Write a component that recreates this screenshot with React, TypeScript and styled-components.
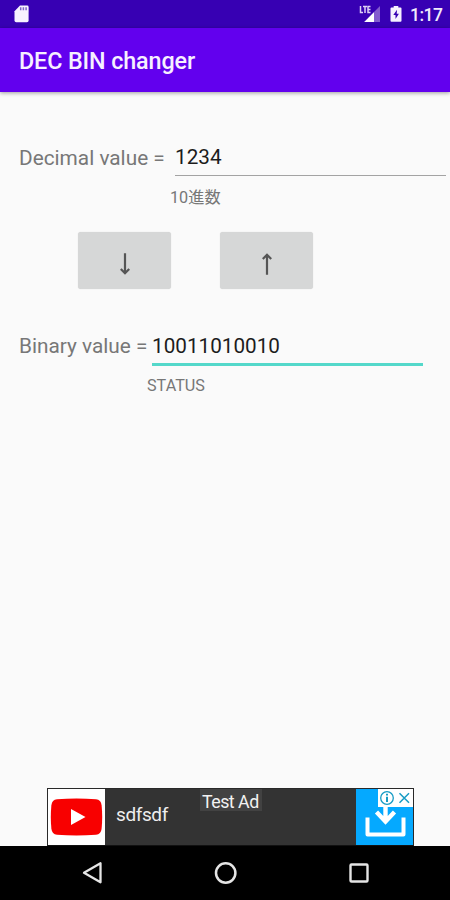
import React from "react";
import styled, { createGlobalStyle } from "styled-components";

const GlobalStyle = createGlobalStyle`
  *, *::before, *::after { box-sizing: border-box; }
  html, body { margin: 0; padding: 0; background: #fafafa; }
  body { font-family: Roboto, "Noto Sans CJK JP", sans-serif; overflow: hidden; }
`;

const Screen = styled.div`
  width: 450px;
  height: 900px;
  display: flex;
  flex-direction: column;
  background: #fafafa;
`;

const StatusBar = styled.header`
  height: 28px;
  display: flex;
  align-items: center;
  padding: 0 9px 0 14px;
  background: #3700b3;
  color: #f1ebfb;
`;

const StatusIcons = styled.div`
  margin-left: auto;
  display: flex;
  align-items: center;
`;

const BatteryGap = styled.span`
  display: flex;
  margin-left: 9px;
`;

const Clock = styled.span`
  margin: 2px 0 0 8px;
  width: 31px;
  font-size: 17.5px;
  line-height: 20px;
  font-weight: 500;
  white-space: nowrap;
  letter-spacing: -0.5px;
`;

const AppBar = styled.div`
  height: 64px;
  flex-shrink: 0;
  display: flex;
  align-items: center;
  padding: 2px 19px 0;
  background: #6200ee;
  box-shadow: 0 1px 4px rgba(0, 0, 0, 0.38);
  z-index: 1;
`;

const Title = styled.h1`
  margin: 0;
  color: #f7f0ff;
  font-size: 23.3px;
  line-height: 28px;
  font-weight: 500;
  letter-spacing: -0.1px;
  white-space: nowrap;
`;

const Content = styled.main`
  flex: 1;
  min-height: 0;
  display: flex;
  flex-direction: column;
  padding-top: 49px;
`;

const FieldRow = styled.div`
  display: flex;
  height: 36px;
  padding-left: 19px;
`;

const Label = styled.label<{ $width: number }>`
  width: ${(p) => p.$width}px;
  flex-shrink: 0;
  color: #777;
  font-size: 20.8px;
  line-height: 34px;
  white-space: pre;
`;

const ValueInput = styled.input<{ $active?: boolean }>`
  width: 271px;
  height: ${(p) => (p.$active ? 37 : 35)}px;
  flex-shrink: 0;
  padding: 0 0 ${(p) => (p.$active ? 1 : 2)}px;
  border: 0;
  border-bottom: ${(p) => (p.$active ? "3px solid #54d8ca" : "1px solid #a3a3a3")};
  border-radius: 0;
  outline: 0;
  background: transparent;
  color: #1c1c1c;
  font-family: Roboto, sans-serif;
  font-size: 20.7px;
`;

const Hint = styled.p<{ $indent: number }>`
  margin: 10px 0 0 ${(p) => p.$indent}px;
  height: 22px;
  color: #777;
  font-size: 16.2px;
  line-height: 22px;
  white-space: nowrap;
`;

const ButtonRow = styled.div`
  display: flex;
  gap: 49px;
  margin: 23px 0 40px 78px;
`;

const ArrowButton = styled.button`
  width: 93px;
  height: 57px;
  display: flex;
  align-items: center;
  justify-content: center;
  padding: 6px 0 0;
  border: 0;
  border-radius: 3px;
  background: #d6d7d7;
  box-shadow: 0 0 1px rgba(0, 0, 0, 0.18);
  color: #555;
`;

const AdBanner = styled.aside`
  position: relative;
  width: 367px;
  height: 58px;
  margin: auto 0 0 47px;
  display: flex;
  background: #333;
  border: 1px solid #292929;
  border-bottom-color: #111;
`;

const AdLogo = styled.div`
  width: 57px;
  display: flex;
  align-items: center;
  justify-content: center;
  background: #fff;
`;

const AdHeadline = styled.span`
  margin: 14px 0 0 11px;
  color: #eee;
  font-size: 19px;
  line-height: 24px;
  letter-spacing: -0.4px;
`;

const TestTag = styled.span`
  position: absolute;
  top: 0;
  left: 152px;
  width: 62px;
  height: 22px;
  padding-left: 2px;
  background: #424242;
  color: #f2f2f2;
  font-size: 17.8px;
  line-height: 25px;
  letter-spacing: -0.5px;
  white-space: nowrap;
`;

const AdAction = styled.div`
  width: 57px;
  margin-left: auto;
  background: #05a9ff;
`;

const AdChoices = styled.div`
  position: absolute;
  top: 0;
  right: 0;
  width: 35px;
  height: 18px;
  background: #fff;
`;

const NavBar = styled.nav`
  height: 54px;
  flex-shrink: 0;
  display: flex;
  align-items: center;
  justify-content: space-between;
  padding: 0 78px 0 80px;
  background: #000;
`;

const SdCardIcon = () => (
  <svg width="16" height="18" viewBox="0 0 16 18">
    <path d="M6 .5h7.200q1.400 0 1.400 1.400v13.700q0 1.700-1.700 1.700H2.200Q.5 17.300.5 15.600V6.200Z" fill="#f7f2ff" />
    <path d="M6.700 2.300v3M9.400 2.300v3M12.100 2.300v3" stroke="#8062c8" strokeWidth="1.500" />
  </svg>
);

const SignalIcon = () => (
  <svg width="22" height="18" viewBox="0 0 22 18">
    <path d="M21 1v16H5Z" fill="#835bce" />
    <path d="M15 7.300V17H5.300Z" fill="#fff" />
    <path d="M1.500 1v6.500H4M4 1.500h4M6 1.500v6.500M11.500 1.500H9v6h2.500M9 4.500h2.500" fill="none" stroke="#ded0f5" strokeWidth="1.500" />
  </svg>
);

const BatteryIcon = () => (
  <svg width="12" height="18" viewBox="0 0 12 18">
    <path d="M3.700 1h4.600v1.500h2.200q1 0 1 1v12.300q0 1-1 1h-9q-1 0-1-1V3.500q0-1 1-1h2.200Z" fill="#f6f0ff" />
    <path d="M7 4.800 3.300 10h2.200v4L8.900 8.800H6.700Z" fill="#3700b3" />
  </svg>
);

const DownArrow = () => (
  <svg width="12" height="24" viewBox="0 0 12 24">
    <path d="M6 1.300v20M1.800 17 6 21.200 10.200 17" fill="none" stroke="currentColor" strokeWidth="2.200" />
  </svg>
);

const UpArrow = () => (
  <svg width="12" height="24" viewBox="0 0 12 24">
    <path d="M6 22.700v-20M1.800 7 6 2.800 10.200 7" fill="none" stroke="currentColor" strokeWidth="2.200" />
  </svg>
);

const PlayLogo = () => (
  <svg width="53" height="38" viewBox="0 0 53 38">
    <path d="M7 1.200Q26.500-.2 46 1.200q5 .4 5.600 6 1.200 11.800 0 23.600-.6 5.600-5.600 6-19.500 1.400-39 0-5-.4-5.600-6-1.200-11.800 0-23.600Q2 1.600 7 1.200Z" fill="#f80000" />
    <path d="M21 11v16l14.500-8Z" fill="#fff" />
  </svg>
);

const DownloadIcon = () => (
  <svg width="57" height="56" viewBox="0 0 57 56">
    <path d="M11.500 28.500v17h36v-17" fill="none" stroke="#fff" strokeWidth="4" strokeLinejoin="round" />
    <path d="M29.500 16v17M20.500 23l9 9.500 9-9.500" fill="none" stroke="#fff" strokeWidth="4.400" />
  </svg>
);

const AdChoicesIcon = () => (
  <svg width="35" height="18" viewBox="0 0 35 18" fill="none" stroke="#169bc4">
    <circle cx="9" cy="9" r="6.300" strokeWidth="1.300" />
    <path d="M9 7.700v5.300M9 4.700v1.700" strokeWidth="2" />
    <path d="m21.500 4.200 9.500 9.500M31 4.200l-9.500 9.500" strokeWidth="1.500" />
  </svg>
);

const BackIcon = () => (
  <svg width="26" height="26" viewBox="0 0 26 26">
    <path d="M20.500 3.300v19L4 12.800Z" fill="none" stroke="#e5e5e5" strokeWidth="2.300" strokeLinejoin="round" />
  </svg>
);

const HomeIcon = () => (
  <svg width="26" height="26" viewBox="0 0 26 26">
    <circle cx="12.700" cy="13" r="9.700" fill="none" stroke="#e5e5e5" strokeWidth="2.500" />
  </svg>
);

const RecentsIcon = () => (
  <svg width="26" height="26" viewBox="0 0 26 26">
    <rect x="4.500" y="4.500" width="17" height="17" rx="1" fill="none" stroke="#e5e5e5" strokeWidth="2.400" />
  </svg>
);

export default function App() {
  return (
    <>
      <GlobalStyle />
      <Screen>
        <StatusBar>
          <SdCardIcon />
          <StatusIcons>
            <SignalIcon />
            <BatteryGap>
              <BatteryIcon />
            </BatteryGap>
            <Clock>1:17</Clock>
          </StatusIcons>
        </StatusBar>
        <AppBar>
          <Title>DEC BIN changer</Title>
        </AppBar>
        <Content>
          <FieldRow>
            <Label htmlFor="decimal" $width={156}>Decimal value =</Label>
            <ValueInput id="decimal" defaultValue="1234" />
          </FieldRow>
          <Hint $indent={170}>10進数</Hint>
          <ButtonRow>
            <ArrowButton aria-label="To binary"><DownArrow /></ArrowButton>
            <ArrowButton aria-label="To decimal"><UpArrow /></ArrowButton>
          </ButtonRow>
          <FieldRow>
            <Label htmlFor="binary" $width={133}>Binary value =</Label>
            <ValueInput id="binary" $active defaultValue="10011010010" />
          </FieldRow>
          <Hint $indent={147}>STATUS</Hint>
          <AdBanner>
            <AdLogo><PlayLogo /></AdLogo>
            <AdHeadline>sdfsdf</AdHeadline>
            <TestTag>Test Ad</TestTag>
            <AdAction><DownloadIcon /></AdAction>
            <AdChoices><AdChoicesIcon /></AdChoices>
          </AdBanner>
        </Content>
        <NavBar>
          <BackIcon />
          <HomeIcon />
          <RecentsIcon />
        </NavBar>
      </Screen>
    </>
  );
}
